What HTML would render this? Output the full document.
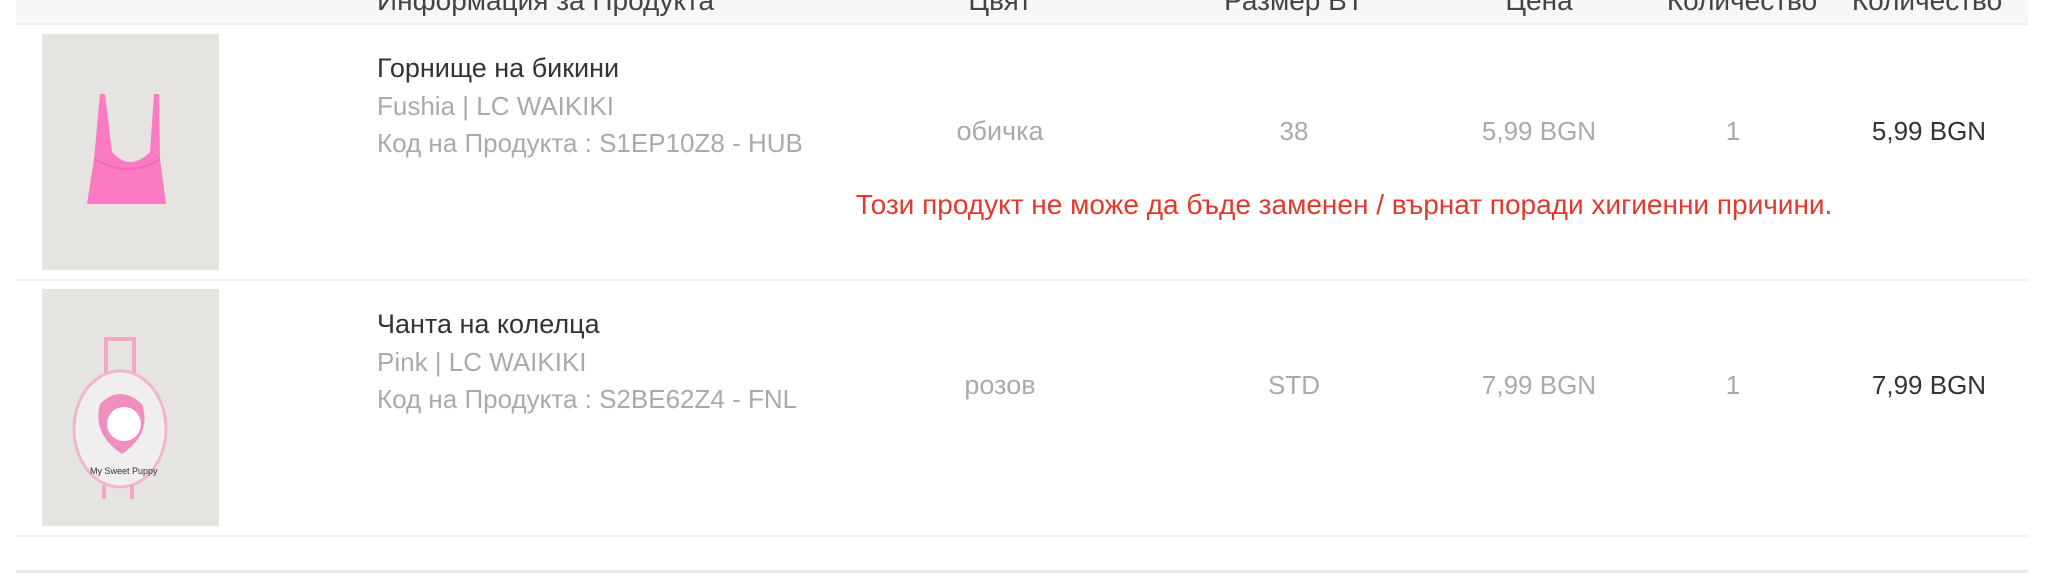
<!DOCTYPE html>
<html><head><meta charset="utf-8"><style>
body{margin:0;width:2045px;height:587px;background:#fff;position:relative;overflow:hidden;font-family:"Liberation Sans",sans-serif;}
.a{position:absolute;white-space:nowrap;}
.c{transform:translateX(-50%);}
.hd{position:absolute;left:16px;right:17px;top:0;height:23px;background:#f7f7f7;border-bottom:2px solid #eee;}
.h{font-size:28px;color:#444;top:-15px;}
.line{position:absolute;left:16px;right:17px;height:2px;background:#f1f1f1;}
.t{font-size:27px;color:#333;}
.g{font-size:26px;color:#aaa;}
.img{position:absolute;left:42px;width:177px;background:#e5e4e1;}
</style></head><body>
<div class="hd"></div>
<div class="a h" style="left:377px">Информация за Продукта</div>
<div class="a h c" style="left:1000px">Цвят</div>
<div class="a h c" style="left:1294px">Размер BT</div>
<div class="a h c" style="left:1539px">Цена</div>
<div class="a h c" style="left:1742px">Количество</div>
<div class="a h c" style="left:1927px">Количество</div>

<div class="img" style="top:34px;height:236px">
<svg width="177" height="236" viewBox="0 0 177 236">
<path d="M58 60 L63 60 L70 118 Q88 138 108 118 L112 60 L117 60 L118 125 L124 170 L45 170 L52 125 Z" fill="#fb7ac4"/>
<path d="M52 125 Q88 145 118 125" stroke="#f06ab5" fill="none" stroke-width="2"/>
</svg></div>
<div class="a t" style="left:377px;top:53px">Горнище на бикини</div>
<div class="a g" style="left:377px;top:91px">Fushia | LC WAIKIKI</div>
<div class="a g" style="left:377px;top:128px">Код на Продукта : S1EP10Z8 - HUB</div>
<div class="a g c" style="left:1000px;top:116px;font-size:27px">обичка</div>
<div class="a g c" style="left:1294px;top:116px">38</div>
<div class="a g c" style="left:1539px;top:116px">5,99 BGN</div>
<div class="a g c" style="left:1733px;top:116px">1</div>
<div class="a t c" style="left:1929px;top:116px;font-size:26px">5,99 BGN</div>
<div class="a c" style="left:1344px;top:189px;font-size:28px;color:#e03a2f">Този продукт не може да бъде заменен / върнат поради хигиенни причини.</div>
<div class="line" style="top:279px"></div>

<div class="img" style="top:289px;height:237px">
<svg width="177" height="237" viewBox="0 0 177 237">
<rect x="62" y="50" width="4" height="60" fill="#f2a7c3"/><rect x="90" y="50" width="4" height="60" fill="#f2a7c3"/>
<rect x="62" y="48" width="32" height="4" fill="#f2a7c3"/>
<ellipse cx="78" cy="140" rx="46" ry="58" fill="#f1eef0" stroke="#f2b6cc" stroke-width="3"/>
<path d="M58 115 Q78 95 100 115 Q110 145 80 165 Q50 145 58 115Z" fill="#f08fbf"/>
<circle cx="82" cy="135" r="17" fill="#fff"/>
<text x="48" y="185" font-size="9" fill="#333" font-family="Liberation Sans">My Sweet Puppy</text>
<rect x="60" y="196" width="4" height="14" fill="#f2a7c3"/><rect x="88" y="196" width="4" height="14" fill="#f2a7c3"/>
</svg></div>
<div class="a t" style="left:377px;top:309px">Чанта на колелца</div>
<div class="a g" style="left:377px;top:347px">Pink | LC WAIKIKI</div>
<div class="a g" style="left:377px;top:384px">Код на Продукта : S2BE62Z4 - FNL</div>
<div class="a g c" style="left:1000px;top:370px;font-size:27px">розов</div>
<div class="a g c" style="left:1294px;top:370px">STD</div>
<div class="a g c" style="left:1539px;top:370px">7,99 BGN</div>
<div class="a g c" style="left:1733px;top:370px">1</div>
<div class="a t c" style="left:1929px;top:370px;font-size:26px">7,99 BGN</div>
<div class="line" style="top:535px"></div>
<div class="line" style="top:570px;height:3px;background:#eaeaea"></div>
</body></html>
